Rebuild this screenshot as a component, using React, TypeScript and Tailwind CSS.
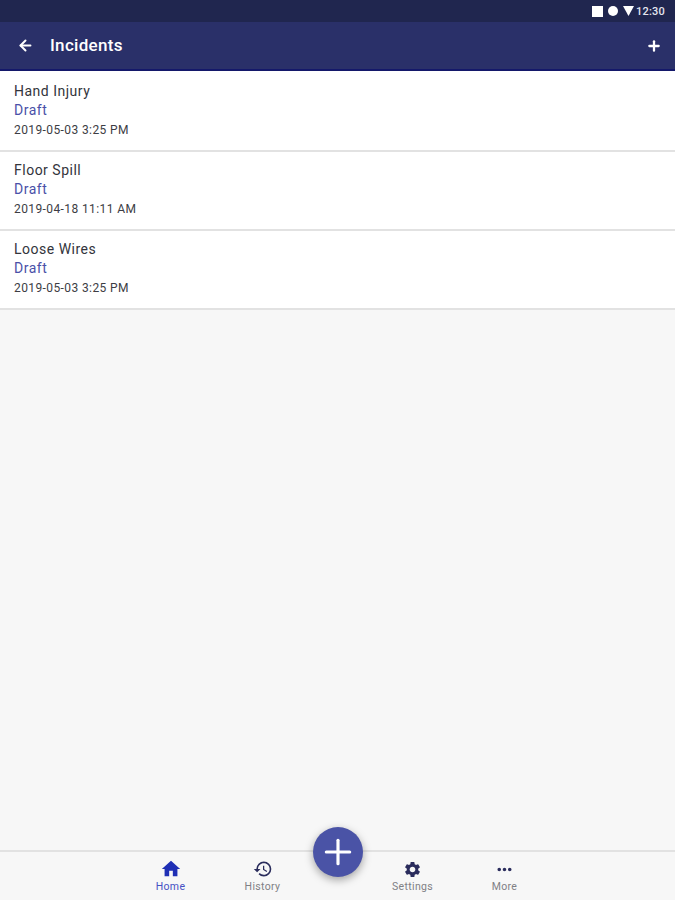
// App.tsx
import type { ReactNode } from "react"
import { ArrowLeft, Plus } from "lucide-react"
import { MdHistory, MdHome, MdMoreHoriz, MdSettings } from "react-icons/md"

const incidents = [
  { title: "Hand Injury", status: "Draft", date: "2019-05-03 3:25 PM" },
  { title: "Floor Spill", status: "Draft", date: "2019-04-18 11:11 AM" },
  { title: "Loose Wires", status: "Draft", date: "2019-05-03 3:25 PM" },
]

function NavItem({ icon, label, active }: { icon: ReactNode; label: string; active?: boolean }) {
  return (
    <div className={`w-[92px] flex flex-col items-center pt-[6px] ${active ? "text-[#4650c4]" : "text-[#808085]"}`}>
      <div className={`h-[22px] flex items-center justify-center ${active ? "text-[#1f2fb5]" : "text-[#2a2c5c]"}`}>
        {icon}
      </div>
      <span className="mt-[1px] text-[10.5px] leading-[12px] tracking-[0.35px]">{label}</span>
    </div>
  )
}

export default function App() {
  return (
    <div className="relative flex flex-col h-[900px] w-[675px] overflow-hidden bg-[#f7f7f7] font-['Roboto',sans-serif]">
      {/* Status bar */}
      <div className="h-[22px] bg-[#20264f] flex items-center justify-end pr-[10px] text-white">
        <div className="w-[11px] h-[11px] bg-white" />
        <div className="ml-[5px] w-[10px] h-[10px] bg-white rounded-full" />
        <svg viewBox="0 0 11 10" className="ml-[5px] w-[11px] h-[10px] fill-white">
          <path d="M0 0h11L5.5 10z" />
        </svg>
        <span className="ml-[2px] text-[11px] leading-none tracking-[0.2px] font-medium text-[#e4e5ee]">12:30</span>
      </div>

      {/* Toolbar */}
      <header className="h-[49px] bg-[#2a3069] border-b-2 border-[#14186a] flex items-center pl-[17px] pr-[13px] text-white">
        <ArrowLeft className="w-[17px] h-[17px]" strokeWidth={2.8} />
        <h1 className="ml-[16px] text-[17px] tracking-[0.3px] font-medium flex-1">Incidents</h1>
        <Plus className="w-[16px] h-[16px]" strokeWidth={3.4} />
      </header>

      {/* List */}
      <ul className="bg-white pt-[2px]">
        {incidents.map((item) => (
          <li key={item.title} className="h-[79px] bg-white border-b-2 border-[#e2e2e2] pl-[14px] pt-[8px]">
            <div className="text-[14px] leading-[20px] tracking-[0.5px] text-[#33343c]">{item.title}</div>
            <div className="text-[14px] leading-[19px] tracking-[0.5px] text-[#4a50a8]">{item.status}</div>
            <div className="text-[12px] leading-[21px] tracking-[0.4px] text-[#3c3d44]">{item.date}</div>
          </li>
        ))}
      </ul>

      <div className="flex-1" />

      {/* Bottom navigation */}
      <nav className="h-[50px] border-t-2 border-[#e2e2e2] flex justify-center">
        <NavItem active icon={<MdHome className="w-[22px] h-[22px]" />} label="Home" />
        <NavItem icon={<MdHistory className="w-[20px] h-[20px]" />} label="History" />
        <div className="w-[58px]" />
        <NavItem icon={<MdSettings className="w-[19px] h-[19px]" />} label="Settings" />
        <NavItem icon={<MdMoreHoriz className="w-[21px] h-[21px]" />} label="More" />
      </nav>

      {/* FAB */}
      <button className="absolute left-[313px] top-[827px] w-[50px] h-[50px] rounded-full bg-[#4a53a6] shadow-[0_3px_8px_rgba(0,0,0,0.35)] flex items-center justify-center text-white">
        <Plus className="w-[40px] h-[40px]" strokeWidth={1.9} />
      </button>
    </div>
  )
}
